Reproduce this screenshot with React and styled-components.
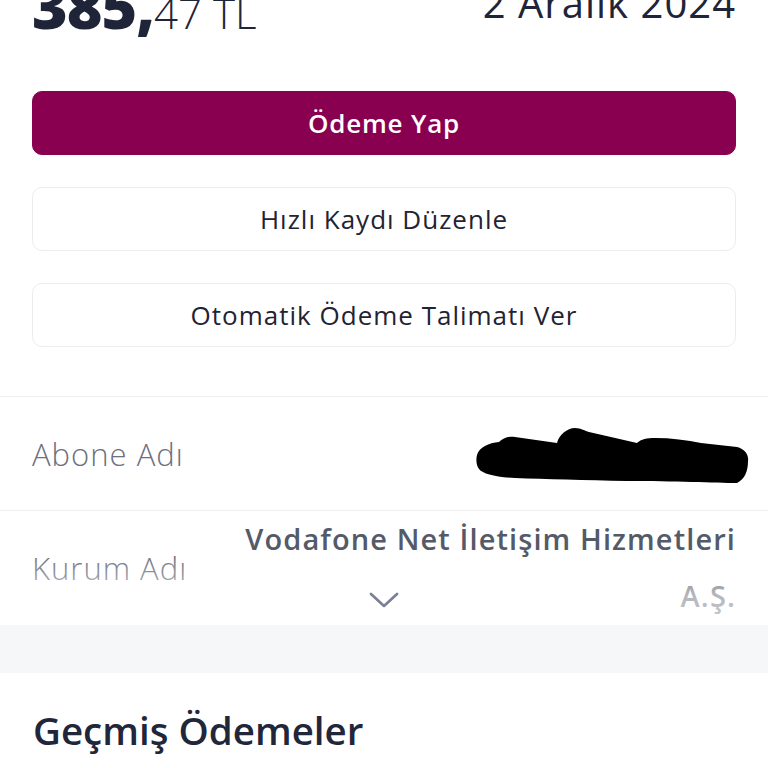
import React from 'react';
import styled, { createGlobalStyle } from 'styled-components';

const GlobalStyle = createGlobalStyle`
    * {
        box-sizing: border-box;
    }

    body {
        margin: 0;
        background: #ffffff;
        font-family: "Open Sans", "Noto Sans", sans-serif;
        color: #1f2438;
        overflow: hidden;
    }
`

const Page = styled.div`
    width: 768px;
    height: 768px;
    overflow: hidden;
    display: flex;
    flex-direction: column;
`

const Summary = styled.section`
    padding: 0 32px;
`

const Header = styled.div`
    display: flex;
    justify-content: space-between;
    align-items: flex-start;
    margin-top: -24px;
    height: 115px;
`

const Amount = styled.div`
    font-size: 61px;
    line-height: 60px;
    letter-spacing: -1px;

    b {
        font-weight: 800;
    }

    span {
        font-weight: 300;
        font-size: 42px;
        letter-spacing: 0;
    }
`

const DateText = styled.div`
    font-size: 40px;
    line-height: 40px;
    font-weight: 400;
    letter-spacing: 1px;
    margin-top: 7px;
`

const Actions = styled.div`
    display: flex;
    flex-direction: column;
    gap: 32px;
`

const ActionButton = styled.button`
    width: 100%;
    height: 64px;
    border-radius: 10px;
    border: 1px solid ${p => p.primary ? '#8a0050' : '#ececef'};
    background: ${p => p.primary ? '#8a0050' : '#ffffff'};
    color: ${p => p.primary ? '#ffffff' : '#1f2333'};
    font-family: "Open Sans", "Noto Sans", sans-serif;
    font-size: 26px;
    font-weight: ${p => p.primary ? 600 : 500};
    letter-spacing: ${p => p.primary ? '0.8px' : '1px'};
    display: flex;
    align-items: center;
    justify-content: center;
    cursor: pointer;
`

const Details = styled.section`
    margin-top: 49px;
    border-top: 1px solid #eeeff2;
`

const Row = styled.div`
    position: relative;
    display: flex;
    justify-content: space-between;
    align-items: center;
    min-height: 114px;
    padding: 0 32px;
    border-bottom: ${p => p.last ? 'none' : '1px solid #eeeff2'};
`

const Label = styled.span`
    font-size: 31px;
    font-weight: 300;
    letter-spacing: 1px;
    color: #6c7080;
`

const Value = styled.span`
    text-align: right;
    font-size: 29px;
    line-height: 57px;
    font-weight: 600;
    letter-spacing: 1.1px;
    color: #555a69;
    margin-top: -2px;
`

const Fade = styled.div`
    position: absolute;
    left: 0;
    right: 0;
    bottom: 0;
    height: 70px;
    background: linear-gradient(to bottom, rgba(255, 255, 255, 0) 0%, rgba(255, 255, 255, 0.55) 55%, rgba(255, 255, 255, 0.7) 100%);
    display: flex;
    justify-content: center;
    align-items: flex-end;
    padding-bottom: 16px;
`

const Band = styled.div`
    height: 48px;
    background: #f6f7f9;
`

const History = styled.section`
    padding: 31px 33px 0;
`

const Title = styled.h2`
    margin: 0;
    font-family: "Open Sans", "Noto Sans", sans-serif;
    font-size: 38.5px;
    font-weight: 600;
    color: #22263a;
`

const RedactionMark = styled.svg`
    margin-right: -13px;
    margin-top: 4px;
`

const Redaction = () => (
    <RedactionMark width="274" height="58" viewBox="0 0 274 58">
        <path
            fill="#000"
            d="M2 28 C4 20 14 16 24 15 C28 11 34 9 40 10 L82 16 C84 8 92 1 100 1 C106 1 110 4 114 5 L162 16 C166 12 172 11 180 11 C196 11 212 13 226 16 L262 20 C270 22 274 28 273 34 C273 44 270 52 262 56 C240 56 200 54 152 54 C110 53 70 52 40 51 C20 50 8 47 4 42 C1 38 1 32 2 28 Z"
        />
    </RedactionMark>
)

const Chevron = () => (
    <svg width="30" height="17" viewBox="0 0 30 17" fill="none">
        <path d="M2 2 L15 14 L28 2" stroke="#7a7f92" strokeWidth="2.6" strokeLinecap="round" strokeLinejoin="round" />
    </svg>
)

export default function App() {
    return (
        <Page>
            <GlobalStyle />
            <Summary>
                <Header>
                    <Amount><b>385,</b><span>47 TL</span></Amount>
                    <DateText>2 Aralık 2024</DateText>
                </Header>
                <Actions>
                    <ActionButton primary>Ödeme Yap</ActionButton>
                    <ActionButton>Hızlı Kaydı Düzenle</ActionButton>
                    <ActionButton>Otomatik Ödeme Talimatı Ver</ActionButton>
                </Actions>
            </Summary>
            <Details>
                <Row>
                    <Label>Abone Adı</Label>
                    <Redaction />
                </Row>
                <Row last>
                    <Label>Kurum Adı</Label>
                    <Value>Vodafone Net İletişim Hizmetleri<br />A.Ş.</Value>
                    <Fade><Chevron /></Fade>
                </Row>
            </Details>
            <Band />
            <History>
                <Title>Geçmiş Ödemeler</Title>
            </History>
        </Page>
    )
}
